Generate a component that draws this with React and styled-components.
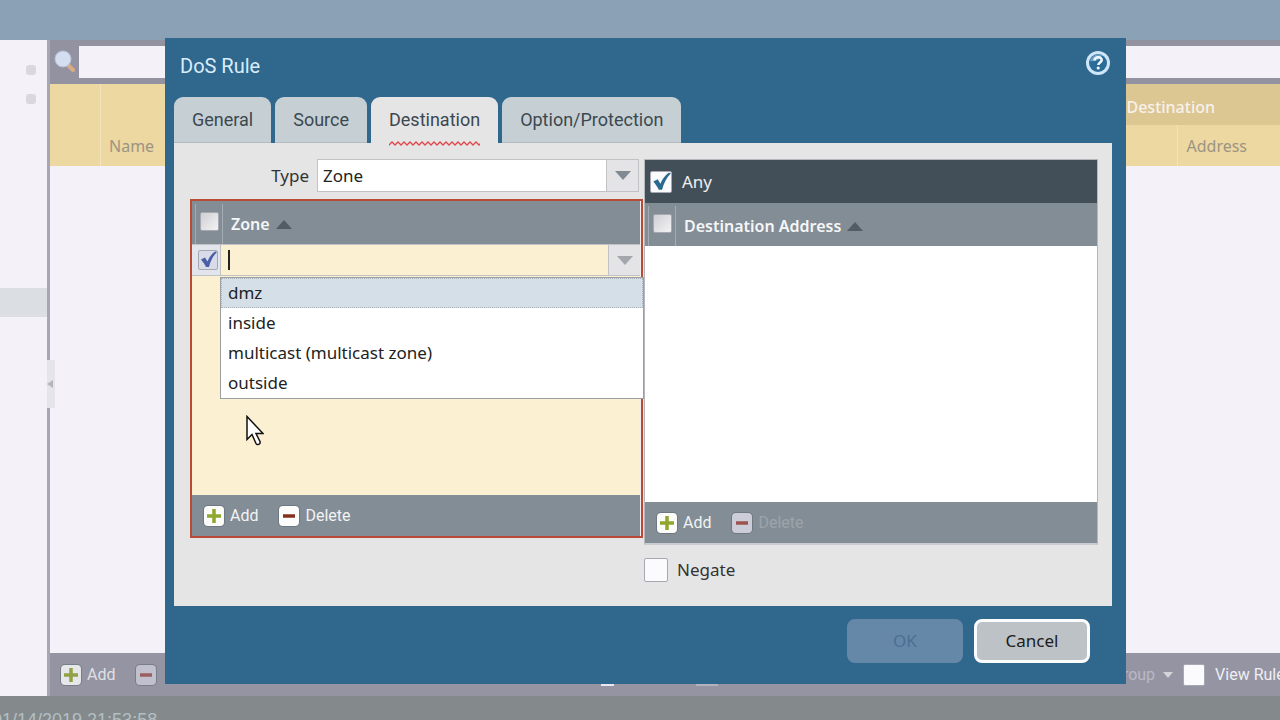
import React, { useState } from "react";
import styled, { createGlobalStyle } from "styled-components";

const zones = ["dmz", "inside", "multicast (multicast zone)", "outside"];
const tabs = ["General", "Source", "Destination", "Option/Protection"];

const AddIcon = () => (
  <svg width="22" height="22" viewBox="0 0 22 22" aria-hidden="true">
    <rect x="0" y="0" width="22" height="22" rx="5" fill="#6f7984" />
    <rect x="1" y="1" width="20" height="20" rx="4" fill="#fbfcfa" />
    <path d="M11 4v14M4 11h14" stroke="#8fa62f" strokeWidth="3.500" />
  </svg>
);

const DeleteIcon = ({ off }) => (
  <svg width="22" height="22" viewBox="0 0 22 22" aria-hidden="true">
    <rect x="0" y="0" width="22" height="22" rx="5" fill="#6f7984" />
    <rect
      x="1"
      y="1"
      width="20"
      height="20"
      rx="4"
      fill={off ? "#cccdd8" : "#fdfcfc"}
    />
    <path d="M5 11h12" stroke={off ? "#9c5250" : "#84301f"} strokeWidth="3.500" />
  </svg>
);

const SearchIcon = () => (
  <svg width="22" height="24" viewBox="0 0 22 24" aria-hidden="true">
    <path
      d="M15 15l5 5"
      stroke="#d9ac85"
      strokeWidth="4"
      strokeLinecap="round"
    />
    <circle cx="10" cy="9" r="8" fill="#d3dff0" stroke="#b6c2d8" />
  </svg>
);

const HelpIcon = () => (
  <svg width="26" height="26" viewBox="0 0 26 26" aria-hidden="true">
    <circle cx="13" cy="13" r="12" fill="#cfe6f8" />
    <circle cx="13" cy="13" r="9" fill="#2b6d98" />
    <path d="M5 11a9 9 0 0 1 12-6c-1 4-6 7-12 6z" fill="#6ba0c2" />
    <path
      d="M9.500 10.500c.3-4.500 7.500-4.300 7.200-.3-.2 2.300-3.200 2.300-3.400 4.800"
      fill="none"
      stroke="#f2f9ff"
      strokeWidth="2.500"
    />
    <circle cx="13.200" cy="18" r="1.600" fill="#f2f9ff" />
  </svg>
);

const DownArrow = ({ color }) => (
  <svg width="16" height="9" viewBox="0 0 16 9" aria-hidden="true">
    <path d="M0 0h16L8 9z" fill={color} />
  </svg>
);

const SortArrow = () => (
  <svg width="16" height="9" viewBox="0 0 16 9" aria-hidden="true">
    <path d="M0 9h16L8 0z" fill="#515c65" />
  </svg>
);

const Check = ({ label, color, ...rest }) => {
  const [on, setOn] = useState(!!rest.start);
  return (
    <CheckWrap>
      <CheckInput
        type="checkbox"
        aria-label={label}
        id={rest.id}
        $size={rest.size}
        $kind={rest.kind}
        checked={on}
        onChange={() => setOn(!on)}
      />
      {on && (
        <CheckMark viewBox="0 0 20 20" aria-hidden="true">
          <path
            d="M3 9.500l4-2 2.500 4C11 7.500 13.500 4 17 1.500l2 .5c-4 4-6.500 9-8 15H8C7 14.500 5 12 3 9.500z"
            fill={color}
          />
        </CheckMark>
      )}
    </CheckWrap>
  );
};

const GridHead = ({ title, label }) => (
  <Head>
    <HeadCheck>
      <Check label={label} size={19} kind="soft" />
    </HeadCheck>
    <HeadTitle>
      {title}
      <SortArrow />
    </HeadTitle>
  </Head>
);

const App = () => {
  const [tab, setTab] = useState("Destination");
  const [zone, setZone] = useState("");

  return (
    <>
      <GlobalStyle />
      <Page>
        <TopBar />
        <Main>
          <Sidebar>
            <Dots>
              <Dot />
              <Dot />
            </Dots>
            <SideRow />
          </Sidebar>
          <Splitter>
            <Handle aria-label="Collapse">
              <svg width="6" height="8" viewBox="0 0 6 8" aria-hidden="true">
                <path d="M6 0v8L0 4z" fill="#b5b5ba" />
              </svg>
            </Handle>
          </Splitter>
          <Rules>
            <SearchBar>
              <SearchIcon />
              <SearchInput aria-label="Search" />
            </SearchBar>
            <RuleTable>
              <colgroup>
                <col width="50" />
                <col />
                <col width="60" />
                <col width="102" />
              </colgroup>
              <thead>
                <tr>
                  <Th rowSpan="2" />
                  <Th rowSpan="2">Name</Th>
                  <GroupTh colSpan="2">Destination</GroupTh>
                </tr>
                <tr>
                  <Th />
                  <Th>Address</Th>
                </tr>
              </thead>
            </RuleTable>
            <Spacer />
            <BottomBar>
              <ToolButton $faded>
                <AddIcon />
                Add
              </ToolButton>
              <ToolButton $faded aria-label="Delete">
                <DeleteIcon off />
              </ToolButton>
              <BarMarks aria-hidden="true">
                <BarMark $width={13} />
                <BarMark $width={22} $dim />
              </BarMarks>
              <BarRight>
                <MenuButton>
                  Group
                  <svg width="10" height="6" viewBox="0 0 10 6" aria-hidden="true">
                    <path d="M0 0h10L5 6z" fill="#d3d3da" />
                  </svg>
                </MenuButton>
                <Check id="view" size={22} kind="plain" />
                <label htmlFor="view">View Rulebase</label>
              </BarRight>
            </BottomBar>
          </Rules>
        </Main>
        <StatusBar>01/14/2019 21:53:58</StatusBar>
      </Page>

      <Overlay>
        <Dialog role="dialog" aria-labelledby="title">
          <TitleBar>
            <Title id="title">DoS Rule</Title>
            <HelpButton aria-label="Help">
              <HelpIcon />
            </HelpButton>
          </TitleBar>
          <Tabs role="tablist">
            {tabs.map((name) => (
              <Tab
                key={name}
                role="tab"
                aria-selected={tab === name}
                $active={tab === name}
                onClick={() => setTab(name)}
              >
                {name}
                {name === "Destination" && (
                  <Squiggle aria-hidden="true">
                    <defs>
                      <pattern
                        id="wave"
                        width="6"
                        height="5"
                        patternUnits="userSpaceOnUse"
                      >
                        <path
                          d="M-1 5L3 1l4 4"
                          fill="none"
                          stroke="#e0474c"
                          strokeWidth="1.300"
                        />
                      </pattern>
                    </defs>
                    <rect width="100%" height="5" fill="url(#wave)" />
                  </Squiggle>
                )}
              </Tab>
            ))}
          </Tabs>
          <Panel>
            <Column>
              <TypeRow>
                <TypeLabel htmlFor="type">Type</TypeLabel>
                <SelectWrap>
                  <Select id="type" defaultValue="Zone">
                    <option>Zone</option>
                    <option>Interface</option>
                  </Select>
                  <Trigger>
                    <DownArrow color="#818a93" />
                  </Trigger>
                </SelectWrap>
              </TypeRow>
              <ZoneGrid>
                <GridHead title="Zone" label="Select all zones" />
                <EditRow>
                  <RowCheck>
                    <Check
                      label="Select zone"
                      size={20}
                      kind="row"
                      color="#4a5fa8"
                      start
                    />
                  </RowCheck>
                  <EditCell>
                    <Caret />
                    <ZoneInput
                      aria-label="Zone"
                      value={zone}
                      onChange={(e) => setZone(e.target.value)}
                    />
                  </EditCell>
                  <Trigger as="button" aria-label="Show zones">
                    <DownArrow color="#a3a7ad" />
                  </Trigger>
                  <Menu role="listbox">
                    {zones.map((val, i) => (
                      <Item
                        key={val}
                        role="option"
                        aria-selected={i === 0}
                        $active={i === 0}
                        onClick={() => setZone(val)}
                      >
                        {val}
                      </Item>
                    ))}
                  </Menu>
                </EditRow>
                <ZoneBody />
                <GridTools>
                  <ToolButton>
                    <AddIcon />
                    Add
                  </ToolButton>
                  <ToolButton>
                    <DeleteIcon />
                    Delete
                  </ToolButton>
                </GridTools>
              </ZoneGrid>
            </Column>
            <Column>
              <AddressGrid>
                <AnyBar>
                  <Check id="any" size={22} kind="plain" color="#2b6a90" start />
                  <label htmlFor="any">Any</label>
                </AnyBar>
                <GridHead
                  title="Destination Address"
                  label="Select all addresses"
                />
                <AddressBody />
                <GridTools>
                  <ToolButton>
                    <AddIcon />
                    Add
                  </ToolButton>
                  <ToolButton disabled>
                    <DeleteIcon off />
                    Delete
                  </ToolButton>
                </GridTools>
              </AddressGrid>
              <NegateRow>
                <Check id="negate" size={24} kind="plain" />
                <label htmlFor="negate">Negate</label>
              </NegateRow>
            </Column>
          </Panel>
          <Buttons>
            <DialogButton disabled>OK</DialogButton>
            <DialogButton>Cancel</DialogButton>
          </Buttons>
        </Dialog>
      </Overlay>
      <Pointer viewBox="0 0 18 30" aria-hidden="true">
        <path
          d="M1 1v23l5-5 4 9c1 2 5 1 4-2l-4-8h7z"
          fill="#fff"
          stroke="#111"
          strokeWidth="1.500"
        />
      </Pointer>
    </>
  );
};

const uiFont = `Roboto, "Liberation Sans", sans-serif`;

const GlobalStyle = createGlobalStyle`
  * {
    box-sizing: border-box;
  }
  body {
    margin: 0;
    overflow: hidden;
    font-family: "Noto Sans", sans-serif;
    font-size: 17px;
    line-height: 24px;
    color: #333;
  }
  button, input, select {
    font: inherit;
    color: inherit;
    margin: 0;
    padding: 0;
    border: 0;
    border-radius: 0;
    background: none;
    outline: none;
  }
  svg {
    display: block;
    flex: none;
  }
`;

const Page = styled.div`
  display: flex;
  flex-direction: column;
  height: 100vh;
  overflow: hidden;
`;

const TopBar = styled.header`
  height: 40px;
  flex: none;
  background: #8ba1b6;
`;

const Main = styled.main`
  display: flex;
  flex: 1;
  min-height: 0;
  background: #f4f2f8;
`;

const Sidebar = styled.nav`
  width: 47px;
  padding-top: 25px;
`;

const Dots = styled.div`
  display: flex;
  flex-direction: column;
  gap: 19px;
  padding-left: 26px;
`;

const Dot = styled.span`
  width: 10px;
  height: 10px;
  border-radius: 3px;
  background: #d9d8de;
`;

const SideRow = styled.div`
  height: 29px;
  margin-top: 184px;
  background: #dbdfe4;
`;

const Splitter = styled.div`
  display: flex;
  align-items: center;
  width: 3px;
  background: #a7a7b3;
`;

const Handle = styled.button`
  display: flex;
  flex: none;
  align-items: center;
  width: 8px;
  height: 48px;
  margin-top: 32px;
  background: #e5e4ea;
`;

const Rules = styled.section`
  display: flex;
  flex: 1;
  flex-direction: column;
  min-width: 0;
`;

const SearchBar = styled.div`
  display: flex;
  align-items: center;
  gap: 4px;
  height: 44px;
  padding-left: 3px;
  background: #9392a0;
`;

const SearchInput = styled.input`
  flex: 1;
  height: 32px;
  padding: 0 8px;
  background: #f4f2f8;
`;

const RuleTable = styled.table`
  width: 100%;
  table-layout: fixed;
  border-collapse: collapse;
  color: #9c9484;
  font-size: 16px;
`;

const Th = styled.th`
  height: 41px;
  padding: 0 8px 8px;
  border-left: 1px solid #f1e3bb;
  background: #ecd8a0;
  font-weight: 400;
  text-align: left;
  vertical-align: bottom;

  &:empty:first-child {
    border-color: #ecd8a0;
  }
`;

const GroupTh = styled(Th)`
  padding-bottom: 6px;
  border-color: #dcc793;
  background: #dcc793;
  color: #f7f1ec;
  font-weight: 500;
`;

const Spacer = styled.div`
  flex: 1;
`;

const BottomBar = styled.div`
  display: flex;
  align-items: center;
  gap: 20px;
  height: 43px;
  padding-left: 10px;
  overflow: hidden;
  background: #9594a3;
  color: #eeeef3;
  font-family: ${uiFont};
  font-size: 16px;
  white-space: nowrap;
`;

/* tool icons in the middle of the bar, only their feet show under a dialog */
const BarMarks = styled.div`
  display: flex;
  flex: 1;
  align-items: center;
  justify-content: center;
  gap: 82px;
  padding-left: 50px;
`;

const BarMark = styled.span`
  width: ${(p) => p.$width}px;
  height: 23px;
  background: ${(p) => (p.$dim ? "#b3b2bf" : "#e8e8ee")};
`;

const BarRight = styled.div`
  display: flex;
  align-items: center;
  gap: 10px;
  width: 168px;
`;

const MenuButton = styled.button`
  display: flex;
  align-items: center;
  gap: 8px;
  color: #b9b8c4;
`;

const StatusBar = styled.footer`
  height: 24px;
  flex: none;
  padding-top: 12px;
  margin-left: -8px;
  background: #84898c;
  color: #b3bfc3;
  font-family: "Liberation Sans", sans-serif;
  font-size: 18px;
`;

const Overlay = styled.div`
  position: fixed;
  inset: 0;
  display: flex;
  align-items: flex-start;
  padding: 38px 154px 0 165px;
`;

const Dialog = styled.section`
  flex: 1;
  min-width: 0;
  background: #2f678d;
`;

const TitleBar = styled.div`
  display: flex;
  align-items: flex-start;
  justify-content: space-between;
  height: 59px;
  padding: 12px 15px 0;
`;

const Title = styled.h1`
  margin: 0;
  padding-top: 4px;
  color: #d9edfa;
  font-family: ${uiFont};
  font-size: 20px;
  font-weight: 400;
  line-height: 24px;
`;

const HelpButton = styled.button`
  cursor: pointer;
`;

const Tabs = styled.div`
  display: flex;
  gap: 4px;
  padding-left: 9px;
`;

const Tab = styled.button`
  position: relative;
  height: 46px;
  padding: 0 18px;
  border-bottom: 1px solid ${(p) => (p.$active ? "#e5e5e5" : "#b3bbc0")};
  border-radius: 9px 9px 0 0;
  background: ${(p) => (p.$active ? "#e5e5e5" : "#c6d0d4")};
  color: #3c4850;
  font-family: ${uiFont};
  font-size: 18px;
`;

const Squiggle = styled.svg`
  position: absolute;
  left: 18px;
  bottom: -4px;
  width: calc(100% - 36px);
  height: 5px;
`;

const Panel = styled.div`
  display: grid;
  grid-template-columns: 1fr 1fr;
  margin: 0 14px 0 9px;
  padding: 16px 14px 24px 16px;
  background: #e5e5e5;
`;

const Column = styled.div`
  min-width: 0;
`;

const TypeRow = styled.div`
  display: flex;
  align-items: center;
  gap: 8px;
  margin-bottom: 7px;
  padding-right: 5px;
`;

const TypeLabel = styled.label`
  width: 119px;
  text-align: right;
`;

const SelectWrap = styled.div`
  display: flex;
  flex: 1;
  position: relative;
  height: 33px;
  border: 1px solid #c0c2c6;
  background: #fff;
`;

const Select = styled.select`
  appearance: none;
  flex: 1;
  padding-left: 5px;
  color: #222;
`;

const Trigger = styled.span`
  display: flex;
  align-items: center;
  justify-content: center;
  width: 32px;
  border-left: 1px solid #c0c2c6;
  background: #e4e4e6;
  pointer-events: none;
`;

const ZoneGrid = styled.div`
  margin-right: 1px;
  padding-right: 1px;
  border: 2px solid #b94a37;
  background: #f3eeee;
`;

const Head = styled.div`
  display: flex;
  height: 43px;
  padding: 3px 0 0 3px;
  background: #838d95;
`;

const HeadCheck = styled.div`
  display: flex;
  justify-content: center;
  width: 28px;
  padding-top: 8px;
  border: solid #a4abb2;
  border-width: 0 1px;
`;

const HeadTitle = styled.div`
  display: flex;
  align-items: center;
  gap: 6px;
  padding-left: 8px;
  color: #f5f6f7;
  font-size: 16px;
  font-weight: 600;
`;

const EditRow = styled.div`
  display: flex;
  position: relative;
  height: 32px;
  border: solid #c0c2c6;
  border-width: 1px 0;
  background: #fcf0d3;
`;

const RowCheck = styled.div`
  display: flex;
  align-items: center;
  justify-content: center;
  width: 29px;
  padding-left: 3px;
  border-right: 1px solid #c0c2c6;
  background: #e3e5ed;
`;

const EditCell = styled.div`
  display: flex;
  align-items: center;
  flex: 1;
  padding-left: 7px;
`;

const Caret = styled.span`
  width: 2px;
  height: 20px;
  background: #222;
`;

const ZoneInput = styled.input`
  flex: 1;
  min-width: 0;
  height: 100%;
  padding-left: 2px;
`;

const Menu = styled.ul`
  position: absolute;
  z-index: 1;
  top: 32px;
  left: 28px;
  right: -4px;
  margin: 0;
  padding: 0;
  border: 1px solid #9b9ea3;
  background: #fff;
  color: #222;
  list-style: none;
`;

const Item = styled.li`
  height: 30px;
  padding: 2px 6px;
  border: 1px dotted ${(p) => (p.$active ? "#aab4bd" : "transparent")};
  background: ${(p) => (p.$active ? "#d5dfe8" : "transparent")};
`;

const ZoneBody = styled.div`
  height: 219px;
  background: #fcf0d3;
`;

const GridTools = styled.div`
  display: flex;
  align-items: center;
  gap: 20px;
  height: 41px;
  padding-left: 11px;
  background: #838d95;
`;

const ToolButton = styled.button`
  display: flex;
  align-items: center;
  gap: 5px;
  color: #f1f3f4;
  font-family: ${uiFont};
  font-size: 16px;
  opacity: ${(p) => (p.$faded ? 0.8 : 1)};

  &:disabled {
    color: #9ca4ab;
  }
`;

const AddressGrid = styled.div`
  border: 1px solid #b4b8bd;
  border-bottom: 2px solid #cbccd1;
`;

const AnyBar = styled.div`
  display: flex;
  align-items: center;
  gap: 10px;
  height: 43px;
  padding-left: 5px;
  background: #434f58;
  color: #eef0f1;
`;

const AddressBody = styled.div`
  height: 256px;
  background: #fff;
`;

const NegateRow = styled.div`
  display: flex;
  align-items: center;
  gap: 9px;
  padding-top: 13px;
`;

const CheckWrap = styled.span`
  position: relative;
  display: flex;
  flex: none;
  align-self: flex-start;

  ${AnyBar} &, ${RowCheck} &, ${BarRight} & {
    align-self: center;
  }
`;

const checkFill = {
  soft: "linear-gradient(135deg, #cfd0d4, #f3f1f3)",
  row: "#d9dce8",
  plain: "#fbfafc",
};

const CheckInput = styled.input`
  appearance: none;
  width: ${(p) => p.$size}px;
  height: ${(p) => p.$size}px;
  border: 1px solid #a6a9b2;
  border-radius: 2px;
  background: ${(p) => checkFill[p.$kind]};
`;

const CheckMark = styled.svg`
  position: absolute;
  inset: 0;
  width: 100%;
  height: 100%;
  pointer-events: none;
`;

const Buttons = styled.div`
  display: flex;
  justify-content: flex-end;
  gap: 11px;
  padding: 13px 36px 21px 0;
`;

const DialogButton = styled.button`
  width: 116px;
  height: 44px;
  border: 3px solid #fbfcfd;
  border-radius: 8px;
  background: #bcc2c6;
  color: #1c1c22;

  &:disabled {
    border-color: #6688a8;
    background: #6688a8;
    color: #49708f;
  }
`;

const Pointer = styled.svg`
  position: fixed;
  left: 246px;
  top: 415px;
  width: 18px;
  height: 31px;
  pointer-events: none;
`;

export default App;
